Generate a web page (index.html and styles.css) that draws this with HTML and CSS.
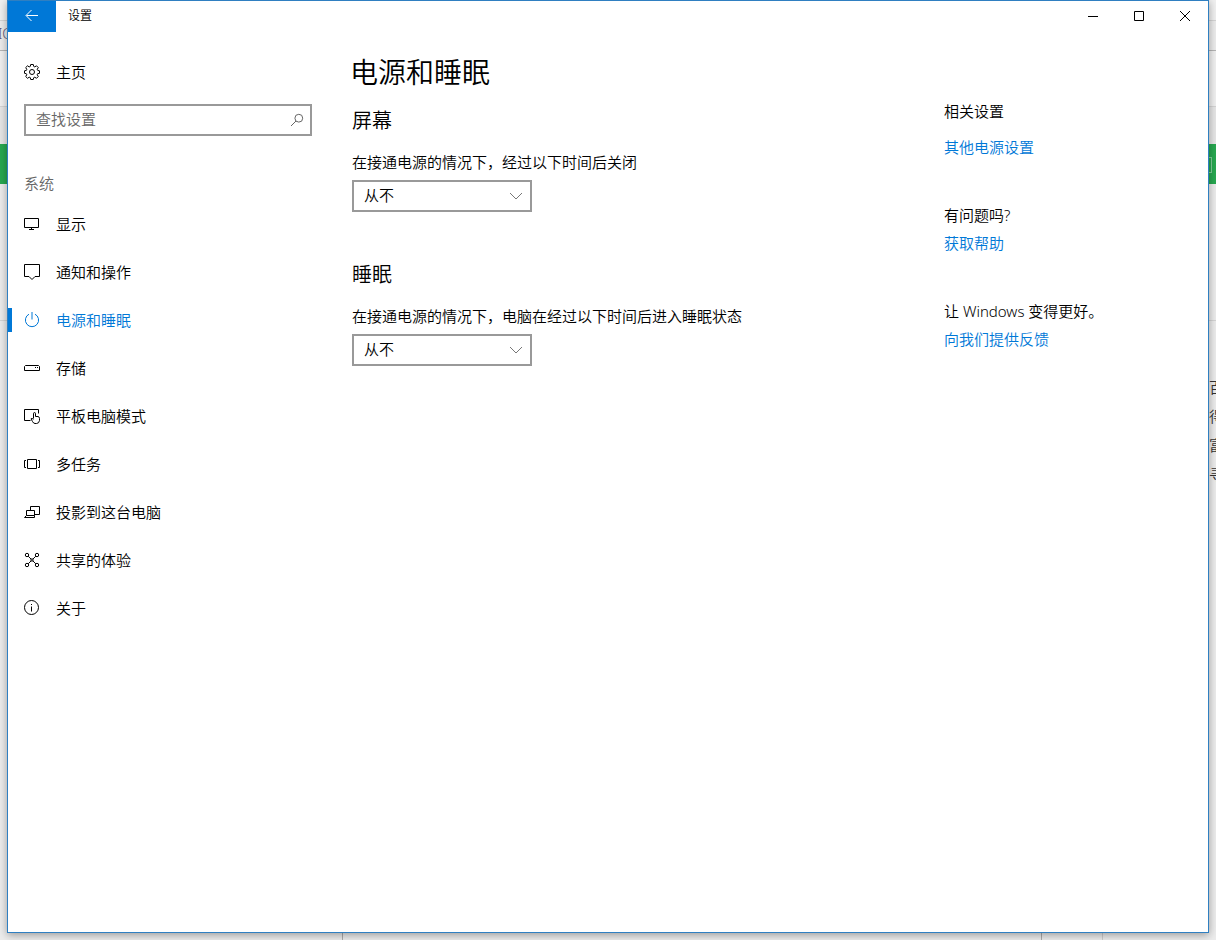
FILE: index.html
```html
<!DOCTYPE html>
<html lang="zh-CN">
<head>
<meta charset="utf-8">
<title>设置</title>
<link rel="stylesheet" href="styles.css">
</head>
<body>
<div class="backdrop" aria-hidden="true">
  <div class="strip strip-tabs"></div>
  <div class="strip strip-address"><span>IC</span></div>
  <div class="strip strip-tools"></div>
  <div class="strip strip-header"></div>
  <div class="strip strip-green"><i></i></div>
  <div class="strip strip-banner"></div>
  <div class="strip strip-page">
    <p>在百</p><p>每得</p><p>丰富</p><p>想寻</p>
  </div>
  <i class="rule rule-a"></i><i class="rule rule-b"></i><i class="rule rule-c"></i>
</div>

<div class="window">
  <header class="titlebar">
    <button class="back" aria-label="返回"><svg width="16" height="16" viewBox="0 0 16 16"><path d="M14 7.500H2.500M7.500 2L2 7.500l5.500 5.500"/></svg></button>
    <span class="title">设置</span>
    <button class="caption" aria-label="最小化"><svg width="12" height="12" viewBox="0 0 12 12"><path d="M1 6.500h10"/></svg></button>
    <button class="caption" aria-label="最大化"><svg width="12" height="12" viewBox="0 0 12 12"><path d="M1.500 1.500h9v9h-9z"/></svg></button>
    <button class="caption" aria-label="关闭"><svg width="12" height="12" viewBox="0 0 12 12"><path d="M1 1l10 10M11 1L1 11"/></svg></button>
  </header>

  <div class="content">
    <nav class="sidebar">
      <a class="item" href="#"><svg class="icon" viewBox="0 0 16 16"><path d="M6.700.5h2.600l.4 1.900 1.100.5 1.700-1.100 1.800 1.800-1.100 1.700.5 1.100 1.800.4v2.500l-1.900.4-.4 1.100 1.100 1.700-1.800 1.800-1.700-1.100-1.100.5-.4 1.800H6.700l-.4-1.900-1.100-.4-1.700 1.100-1.800-1.800 1.100-1.700-.5-1.100L.5 9.300V6.800l1.900-.4.4-1.100-1.100-1.700 1.800-1.800 1.700 1.100 1.100-.5z"/><circle cx="8" cy="8" r="2.500"/></svg>主页</a>
      <label class="search">
        <input type="text" placeholder="查找设置" aria-label="查找设置">
        <svg width="14" height="14" viewBox="0 0 14 14"><circle cx="8.800" cy="5.200" r="3.900"/><path d="M6 8L1 13"/></svg>
      </label>
      <h2 class="group">系统</h2>
      <a class="item" href="#"><svg class="icon" viewBox="0 0 16 16"><path d="M.5 2.500h14v9H.5zM7.500 11.500v2M5 13.500h5"/></svg>显示</a>
      <a class="item" href="#"><svg class="icon" viewBox="0 0 16 16"><path d="M.5.500h15v12h-4.500l-3 3-3-3H.5z"/></svg>通知和操作</a>
      <a class="item active" href="#" aria-current="page"><svg class="icon" viewBox="0 0 16 16"><path d="M8 0v7.500M5 2.200a6.600 6.600 0 1 0 6 0"/></svg>电源和睡眠</a>
      <a class="item" href="#"><svg class="icon" viewBox="0 0 16 16"><path d="M1.500 5.500h13l1 1v4H.5v-4zM11 7.500h1M13 7.500h1"/></svg>存储</a>
      <a class="item" href="#"><svg class="icon" viewBox="0 0 16 16"><path d="M6.500 12.500h-6v-11h14v4M9.500 10.500V5.800q0-1.300 1-1.300t1 1.300V8.500h2.500q1.500.3 1.500 2v2q-.5 3-3 3h-1.500q-1.500 0-2.500-2l-1.500-2.700q.8-1 2.500.5"/></svg>平板电脑模式</a>
      <a class="item" href="#"><svg class="icon" viewBox="0 0 16 16"><path d="M3.500 3.500h9v9h-9zM2 4.500H.5v7H2M14 4.500h1.500v7H14"/></svg>多任务</a>
      <a class="item" href="#"><svg class="icon" viewBox="0 0 16 16"><path d="M6.500 6.500v-4h9v8h-5M2.500 11.500v-5h8v5M2.500 11.500h8v2H.5z"/></svg>投影到这台电脑</a>
      <a class="item" href="#"><svg class="icon" viewBox="0 0 16 16"><circle cx="3" cy="3" r="1.700"/><circle cx="13" cy="3" r="1.700"/><circle cx="3" cy="13" r="1.700"/><circle cx="13" cy="13" r="1.700"/><circle cx="8" cy="8" r="1.200"/><path d="M4.200 4.200l3 3M11.800 4.200l-3 3M4.200 11.800l3-3M11.800 11.800l-3-3"/></svg>共享的体验</a>
      <a class="item" href="#"><svg class="icon" viewBox="0 0 16 16"><circle cx="7.500" cy="7.500" r="7"/><path d="M7.500 6.500v5M7.500 4v1"/></svg>关于</a>
    </nav>

    <main class="main">
      <h1>电源和睡眠</h1>
      <section>
        <h2>屏幕</h2>
        <label for="screen">在接通电源的情况下，经过以下时间后关闭</label>
        <div class="dropdown">
          <select id="screen"><option>从不</option></select>
          <svg width="14" height="8" viewBox="0 0 14 8"><path d="M1 1l6 6 6-6"/></svg>
        </div>
      </section>
      <section>
        <h2>睡眠</h2>
        <label for="sleep">在接通电源的情况下，电脑在经过以下时间后进入睡眠状态</label>
        <div class="dropdown">
          <select id="sleep"><option>从不</option></select>
          <svg width="14" height="8" viewBox="0 0 14 8"><path d="M1 1l6 6 6-6"/></svg>
        </div>
      </section>
    </main>

    <aside class="related">
      <section class="spaced"><h3>相关设置</h3><a href="#">其他电源设置</a></section>
      <section><h3>有问题吗?</h3><a href="#">获取帮助</a></section>
      <section><h3>让 Windows 变得更好。</h3><a href="#">向我们提供反馈</a></section>
    </aside>
  </div>
</div>
</body>
</html>
```

FILE: styles.css
```css
* { box-sizing: border-box; }

body {
  margin: 0;
  padding: 0 7px 7px;
  min-height: 100vh;
  display: flex;
  overflow: hidden;
  background: #ececec;
  color: #000;
  font: 350 15px/20px "Noto Sans", "Noto Sans CJK SC DemiLight", "Noto Sans CJK SC", sans-serif;
}

h1, h2, h3, p { margin: 0; font-weight: inherit; }
a { color: inherit; text-decoration: none; }
button { border: 0; padding: 0; background: none; }
svg { fill: none; stroke: currentColor; flex: none; }

/* Browser page behind the window */
.backdrop {
  position: absolute;
  inset: 0;
  display: flex;
  flex-direction: column;
  overflow: hidden;
  background: #ececec;
}
.strip { flex: none; border-bottom: 1px solid #d4d4d4; }
.strip-tabs { height: 21px; background: #f0f0f0; }
.strip-address { height: 30px; border-color: #b4b4b4; color: #5c5470; font-size: 14px; line-height: 26px; }
.strip-address span { margin-left: -2px; }
.strip-tools { height: 56px; background: #f0f0f0; }
.strip-header { height: 37px; border: 0; background: #e6e6e6; }
.strip-green { height: 40px; border: 0; background: #27a850; padding: 13px 4px; display: flex; justify-content: flex-end; }
.strip-green i { width: 10px; height: 16px; border: 1px solid #7fce98; }
.strip-banner { height: 137px; }
.strip-page { flex: 1; border: 0; padding-top: 52px; }
.strip-page p { width: max-content; margin-left: auto; margin-right: -8px; font-size: 15px; line-height: 29px; color: #333; }
.rule { position: absolute; bottom: 0; width: 1px; height: 8px; background: #aaa; }
.rule-a { left: 342px; }
.rule-b { left: 1041px; }
.rule-c { left: 1102px; background: #ccc; }

/* Settings window */
.window {
  position: relative;
  flex: 1;
  min-width: 0;
  display: flex;
  flex-direction: column;
  background: #fff;
  border: 1px solid #2f7fc1;
  box-shadow: 0 2px 8px rgba(0, 0, 0, .35);
}
.titlebar { display: flex; height: 31px; }
.back {
  width: 48px;
  padding-bottom: 2px;
  display: flex;
  align-items: center;
  justify-content: center;
  background: #0078d7;
  color: #fff;
}
.title { flex: 1; padding-left: 12px; font-size: 12px; line-height: 30px; }
.caption { width: 46px; padding-bottom: 2px; display: flex; align-items: center; justify-content: center; color: #000; }

.content { flex: 1; display: grid; grid-template-columns: 304px 1fr 264px; column-gap: 40px; }

.sidebar { padding: 16px 0; }
.item { display: flex; align-items: center; gap: 16px; height: 48px; padding-left: 16px; }
.icon { width: 16px; height: 16px; }
.active {
  color: #0078d7;
  background: linear-gradient(#0078d7, #0078d7) left center / 4px 24px no-repeat;
}
.search {
  display: flex;
  align-items: center;
  height: 32px;
  margin: 8px 0 0 16px;
  padding: 0 6px 0 10px;
  border: 2px solid #999;
  color: #666;
}
.search input {
  flex: 1;
  min-width: 0;
  padding: 0 0 2px;
  border: 0;
  outline: 0;
  background: none;
  font: inherit;
}
.search input::placeholder { color: #666; opacity: 1; }
.group { margin: 37px 0 7px 16px; font-size: 15px; color: #666; }

.main { padding-top: 20px; }
.main h1 { font-size: 28px; line-height: 40px; margin-left: -2px; }
.main h2 { font-size: 20px; line-height: 28px; margin-bottom: 17px; }
.main section { padding-top: 15px; }
.main section + section { padding-top: 49px; }
.main label { display: block; margin-bottom: 8px; }
.dropdown { display: grid; width: 180px; align-items: center; }
.dropdown > * { grid-area: 1 / 1; }
.dropdown select {
  appearance: none;
  width: 100%;
  height: 32px;
  padding: 0 10px 2px;
  border: 2px solid #999;
  border-radius: 0;
  background: #fff;
  color: #000;
  font: inherit;
}
.dropdown svg { justify-self: end; margin-right: 9px; color: #777; pointer-events: none; }

.related { padding-top: 69px; }
.related h3 { font-size: 15px; margin-bottom: 8px; }
.related section { margin-bottom: 48px; }
.related .spaced h3 { margin-bottom: 16px; }
.related a { display: block; color: #0078d7; }
```
